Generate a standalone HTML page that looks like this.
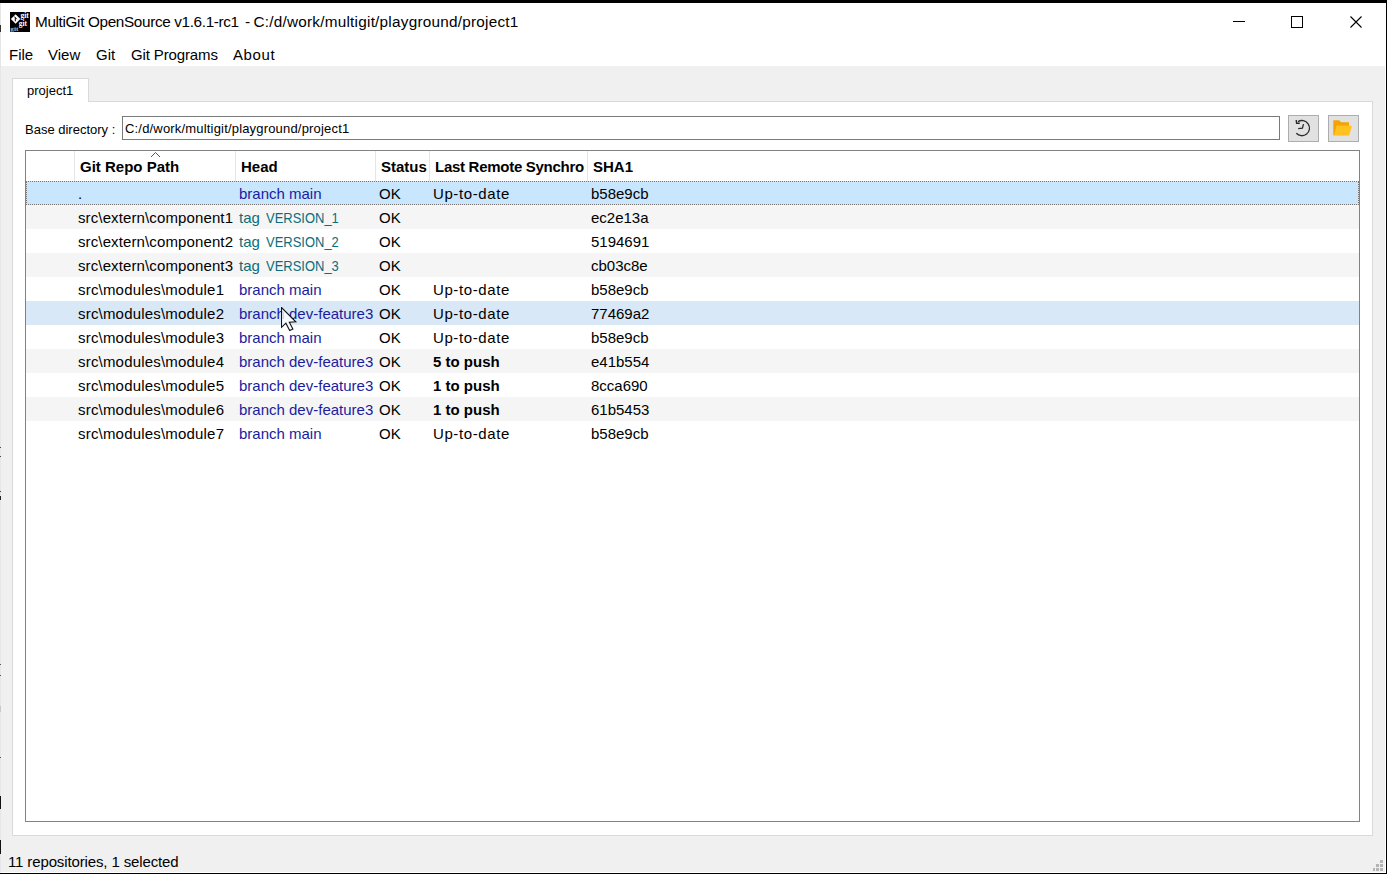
<!DOCTYPE html>
<html><head><meta charset="utf-8">
<style>
*{margin:0;padding:0;box-sizing:border-box}
html,body{width:1387px;height:874px;overflow:hidden}
body{position:relative;background:#f0f0f0;font-family:"Liberation Sans",sans-serif;color:#000}
.a{position:absolute}
.t{position:absolute;white-space:pre;line-height:1;}
#topbar{left:0;top:0;width:1387px;height:3px;background:#000}
#rborder{left:1386px;top:0;width:1px;height:874px;background:#000}
#rwhite{left:1385px;top:3px;width:1px;height:870px;background:#fff}
#bwhite{left:1px;top:872px;width:1385px;height:1px;background:#fff}
#bborder{left:0;top:873px;width:1387px;height:1px;background:#000}
#lstrip{left:0;top:3px;width:1px;height:869px;background:#e6e6e6}
#white{left:1px;top:3px;width:1385px;height:63px;background:#fff}
.menu{font-size:15px;color:#000}
#tab{left:12px;top:78px;width:77px;height:24px;background:#fff;border:1px solid #d9d9d9;border-bottom:none}
#pane{left:12px;top:101px;width:1361px;height:735px;background:#fff;border:1px solid #d9d9d9}
#input{left:122px;top:116px;width:1158px;height:24px;background:#fff;border:1px solid #7a7a7a}
.btn{top:115px;width:31px;height:27px;background:#e1e1e1;border:1px solid #adadad}
#table{left:25px;top:150px;width:1335px;height:672px;background:#fff;border:1px solid #828282}
.sep{top:151px;width:1px;height:30px;background:#e5e5e5}
.hd{font-size:15px;font-weight:bold}
.row{left:26px;width:1333px;height:24px}
.c{font-size:15px}
.br{color:#1a1ca0}
.tg{color:#0b6e7c}
.b{font-weight:bold}
</style></head>
<body>
<div id="topbar" class="a"></div>
<div id="lstrip" class="a"></div>
<div id="white" class="a"></div>
<div class="a" style="left:0;top:25px;width:1px;height:7px;background:#333"></div>
<div class="a" style="left:0;top:447px;width:1px;height:1px;background:#444"></div>
<div class="a" style="left:0;top:456px;width:1px;height:1px;background:#444"></div>
<div class="a" style="left:0;top:491px;width:1px;height:1px;background:#444"></div>
<div class="a" style="left:0;top:496px;width:1px;height:4px;background:#222"></div>
<div class="a" style="left:0;top:664px;width:1px;height:1px;background:#555"></div>
<div class="a" style="left:0;top:675px;width:1px;height:1px;background:#555"></div>
<div class="a" style="left:0;top:706px;width:1px;height:6px;background:#c8c8c8"></div>
<div class="a" style="left:0;top:757px;width:1px;height:1px;background:#555"></div>
<div class="a" style="left:0;top:796px;width:1px;height:13px;background:#111"></div>
<div class="a" style="left:0;top:840px;width:1px;height:14px;background:#111"></div>
<div id="rwhite" class="a"></div>
<div id="bwhite" class="a"></div>
<div id="rborder" class="a"></div>
<div id="bborder" class="a"></div>

<!-- app icon -->
<svg class="a" style="left:10px;top:12px" width="20" height="20" viewBox="0 0 20 20">
<rect width="20" height="20" fill="#000"/>
<path d="M5.6 2.2L10.3 6.9L5.6 11.7L0.9 6.9Z" fill="#fff"/>
<path d="M4.2 4.5L6.8 7.2M5.3 5.6L5.3 9.3" stroke="#000" stroke-width="1"/>
<text x="10.4" y="6.3" font-family="Liberation Serif" font-weight="bold" font-size="7.4" fill="#fff" textLength="8.4" lengthAdjust="spacingAndGlyphs">git</text>
<text x="8.8" y="13.6" font-family="Liberation Serif" font-weight="bold" font-size="8" fill="#fff" textLength="8.2" lengthAdjust="spacingAndGlyphs">git</text>
<text x="0.3" y="18.8" font-family="Liberation Serif" font-weight="bold" font-size="7" fill="#bbb" textLength="8" lengthAdjust="spacingAndGlyphs">git</text>
</svg>

<div class="t" style="left:35px;top:14.4px;font-size:15.3px;letter-spacing:-0.35px">MultiGit OpenSource v1.6.1-rc1</div><div class="t" style="left:245px;top:14.4px;font-size:15.3px">-</div><div class="t" style="left:253.5px;top:14.4px;font-size:15.3px;letter-spacing:0.24px">C:/d/work/multigit/playground/project1</div>

<!-- window controls -->
<div class="a" style="left:1233px;top:21px;width:12px;height:1px;background:#000"></div>
<div class="a" style="left:1291px;top:16px;width:12px;height:12px;border:1px solid #000"></div>
<svg class="a" style="left:1350px;top:16px" width="12" height="12" viewBox="0 0 12 12"><path d="M0.5 0.5L11.5 11.5M11.5 0.5L0.5 11.5" stroke="#000" stroke-width="1.1"/></svg>

<!-- menu -->
<div class="t menu" style="left:9px;top:47px">File</div>
<div class="t menu" style="left:48px;top:47px">View</div>
<div class="t menu" style="left:96px;top:47px">Git</div>
<div class="t menu" style="left:131px;top:47px;letter-spacing:-0.13px">Git Programs</div>
<div class="t menu" style="left:233px;top:47px;letter-spacing:0.6px">About</div>

<div id="pane" class="a"></div>
<div id="tab" class="a"></div>
<div class="t" style="left:27px;top:84px;font-size:13px">project1</div>

<div class="t" style="left:25px;top:123px;font-size:13px">Base directory :</div>
<div id="input" class="a"></div>
<div class="t" style="left:125px;top:122px;font-size:13px;letter-spacing:0.18px">C:/d/work/multigit/playground/project1</div>
<div class="a btn" style="left:1288px"></div>
<div class="a btn" style="left:1328px"></div>

<div id="table" class="a"></div>

<!-- header -->
<div class="a sep" style="left:74px"></div>
<div class="a sep" style="left:235px"></div>
<div class="a sep" style="left:375px"></div>
<div class="a sep" style="left:429px"></div>
<div class="a sep" style="left:587px"></div>
<svg class="a" style="left:150px;top:151px" width="11" height="7" viewBox="0 0 11 7"><path d="M1 6L5.5 1.5L10 6" fill="none" stroke="#555" stroke-width="1"/></svg>
<div class="t hd" style="left:80px;top:159px">Git Repo Path</div>
<div class="t hd" style="left:241px;top:159px">Head</div>
<div class="t hd" style="left:381px;top:159px">Status</div>
<div class="t hd" style="left:435px;top:159px;letter-spacing:-0.28px">Last Remote Synchro</div>
<div class="t hd" style="left:593px;top:159px">SHA1</div>
<!-- rows -->
<div class="a row" style="top:181px;background:#c9e6ff"></div>
<div class="t c" style="left:78px;top:186px">.</div>
<div class="t c br" style="left:239px;top:186px">branch main</div>
<div class="t c" style="left:379px;top:186px">OK</div>
<div class="t c" style="left:433px;top:186px;letter-spacing:0.6px">Up-to-date</div>
<div class="t c" style="left:591px;top:186px">b58e9cb</div>
<div class="a row" style="top:205px;background:#f5f5f5"></div>
<div class="t c" style="left:78px;top:210px;letter-spacing:0.12px">src\extern\component1</div>
<div class="t c tg" style="left:239px;top:210px">tag</div><div class="t c tg" style="left:265.5px;top:210px;transform:scaleX(0.865);transform-origin:0 0">VERSION_1</div>
<div class="t c" style="left:379px;top:210px">OK</div>
<div class="t c" style="left:591px;top:210px">ec2e13a</div>
<div class="a row" style="top:229px;background:#fff"></div>
<div class="t c" style="left:78px;top:234px;letter-spacing:0.12px">src\extern\component2</div>
<div class="t c tg" style="left:239px;top:234px">tag</div><div class="t c tg" style="left:265.5px;top:234px;transform:scaleX(0.865);transform-origin:0 0">VERSION_2</div>
<div class="t c" style="left:379px;top:234px">OK</div>
<div class="t c" style="left:591px;top:234px">5194691</div>
<div class="a row" style="top:253px;background:#f5f5f5"></div>
<div class="t c" style="left:78px;top:258px;letter-spacing:0.12px">src\extern\component3</div>
<div class="t c tg" style="left:239px;top:258px">tag</div><div class="t c tg" style="left:265.5px;top:258px;transform:scaleX(0.865);transform-origin:0 0">VERSION_3</div>
<div class="t c" style="left:379px;top:258px">OK</div>
<div class="t c" style="left:591px;top:258px">cb03c8e</div>
<div class="a row" style="top:277px;background:#fff"></div>
<div class="t c" style="left:78px;top:282px;letter-spacing:0.19px">src\modules\module1</div>
<div class="t c br" style="left:239px;top:282px">branch main</div>
<div class="t c" style="left:379px;top:282px">OK</div>
<div class="t c" style="left:433px;top:282px;letter-spacing:0.6px">Up-to-date</div>
<div class="t c" style="left:591px;top:282px">b58e9cb</div>
<div class="a row" style="top:301px;background:#d9e8f6"></div>
<div class="t c" style="left:78px;top:306px;letter-spacing:0.19px">src\modules\module2</div>
<div class="t c br" style="left:239px;top:306px">branch dev-feature3</div>
<div class="t c" style="left:379px;top:306px">OK</div>
<div class="t c" style="left:433px;top:306px;letter-spacing:0.6px">Up-to-date</div>
<div class="t c" style="left:591px;top:306px">77469a2</div>
<div class="a row" style="top:325px;background:#fff"></div>
<div class="t c" style="left:78px;top:330px;letter-spacing:0.19px">src\modules\module3</div>
<div class="t c br" style="left:239px;top:330px">branch main</div>
<div class="t c" style="left:379px;top:330px">OK</div>
<div class="t c" style="left:433px;top:330px;letter-spacing:0.6px">Up-to-date</div>
<div class="t c" style="left:591px;top:330px">b58e9cb</div>
<div class="a row" style="top:349px;background:#f5f5f5"></div>
<div class="t c" style="left:78px;top:354px;letter-spacing:0.19px">src\modules\module4</div>
<div class="t c br" style="left:239px;top:354px">branch dev-feature3</div>
<div class="t c" style="left:379px;top:354px">OK</div>
<div class="t c b" style="left:433px;top:354px">5 to push</div>
<div class="t c" style="left:591px;top:354px">e41b554</div>
<div class="a row" style="top:373px;background:#fff"></div>
<div class="t c" style="left:78px;top:378px;letter-spacing:0.19px">src\modules\module5</div>
<div class="t c br" style="left:239px;top:378px">branch dev-feature3</div>
<div class="t c" style="left:379px;top:378px">OK</div>
<div class="t c b" style="left:433px;top:378px">1 to push</div>
<div class="t c" style="left:591px;top:378px">8cca690</div>
<div class="a row" style="top:397px;background:#f5f5f5"></div>
<div class="t c" style="left:78px;top:402px;letter-spacing:0.19px">src\modules\module6</div>
<div class="t c br" style="left:239px;top:402px">branch dev-feature3</div>
<div class="t c" style="left:379px;top:402px">OK</div>
<div class="t c b" style="left:433px;top:402px">1 to push</div>
<div class="t c" style="left:591px;top:402px">61b5453</div>
<div class="a row" style="top:421px;background:#fff"></div>
<div class="t c" style="left:78px;top:426px;letter-spacing:0.19px">src\modules\module7</div>
<div class="t c br" style="left:239px;top:426px">branch main</div>
<div class="t c" style="left:379px;top:426px">OK</div>
<div class="t c" style="left:433px;top:426px;letter-spacing:0.6px">Up-to-date</div>
<div class="t c" style="left:591px;top:426px">b58e9cb</div>
<!-- focus rect -->
<div class="a" style="left:26px;top:181px;width:1333px;height:24px;border:1px dotted #7a7674"></div>
<!-- cursor -->
<svg class="a" style="left:281px;top:307px" width="17" height="25" viewBox="0 0 17 25"><path d="M0.5 0.5L0.5 20.3L4.9 16.2L8.7 23.6L11.9 22.1L8.3 15.2L14.8 14.8Z" fill="rgba(255,255,255,0.8)" stroke="#111" stroke-width="1.1" stroke-linejoin="miter"/></svg>
<!-- status -->
<div class="t" style="left:8px;top:854px;font-size:15px;letter-spacing:-0.13px">11 repositories, 1 selected</div>
<!-- size grip -->
<div class="a" style="left:1380px;top:860px;width:3px;height:3px;background:#b4b4b4"></div>
<div class="a" style="left:1376px;top:864px;width:3px;height:3px;background:#b4b4b4"></div>
<div class="a" style="left:1380px;top:864px;width:3px;height:3px;background:#b4b4b4"></div>
<div class="a" style="left:1373px;top:868px;width:2px;height:3px;background:#b4b4b4"></div>
<div class="a" style="left:1376px;top:868px;width:3px;height:3px;background:#b4b4b4"></div>
<div class="a" style="left:1380px;top:868px;width:3px;height:3px;background:#b4b4b4"></div>
<!-- refresh icon -->
<svg class="a" style="left:1288px;top:115px" width="31" height="27" viewBox="0 0 31 27">
<path d="M10 6.6A7.6 7.6 0 1 1 8.3 18.3" fill="none" stroke="#2a2a2a" stroke-width="1.3"/>
<path d="M8.2 5L8.6 8.3L11.8 8.3" fill="none" stroke="#2a2a2a" stroke-width="1.4"/>
<path d="M15.5 9.2L14.4 13.2L10.2 13.6" fill="none" stroke="#2a2a2a" stroke-width="1.3"/>
</svg>
<!-- folder icon -->
<svg class="a" style="left:1328px;top:115px" width="31" height="27" viewBox="0 0 31 27">
<path d="M5.3 5.2L11.2 5.2L13 7.3L21 7.3L21 20.2L5.3 20.2Z" fill="#f4a205"/>
<path d="M8.6 10.5L22.6 10.5Q23.9 10.7 23.5 12.2L21.2 20.2L6.1 20.2Z" fill="#ffc21f"/>
</svg>
</body></html>
